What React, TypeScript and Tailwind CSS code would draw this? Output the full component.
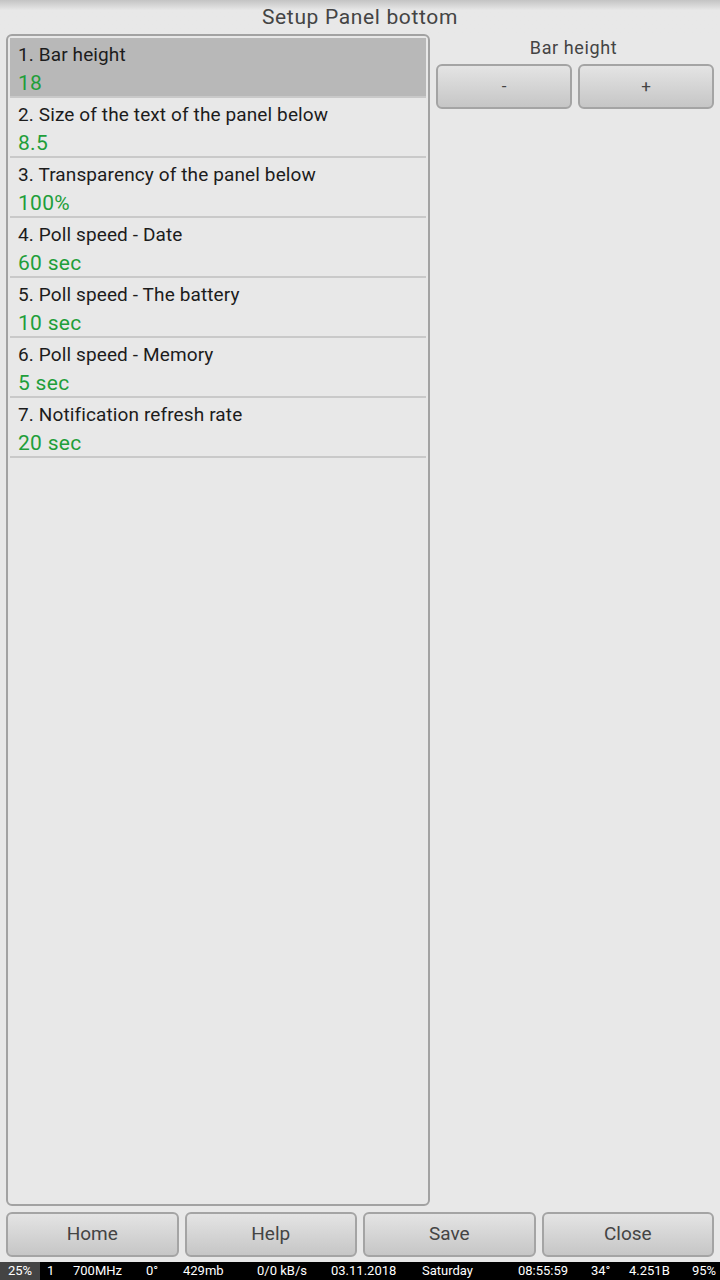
import React from "react";

const rows = [
  ["1. Bar height", "18"],
  ["2. Size of the text of the panel below", "8.5"],
  ["3. Transparency of the panel below", "100%"],
  ["4. Poll speed - Date", "60 sec"],
  ["5. Poll speed - The battery", "10 sec"],
  ["6. Poll speed - Memory", "5 sec"],
  ["7. Notification refresh rate", "20 sec"],
];

const btn =
  "flex items-center justify-center rounded-[6px] border-2 border-[#a4a4a4] bg-gradient-to-b from-[#e4e4e4] to-[#c6c6c6] text-[#444]";

export default function App() {
  return (
    <div
      className="w-[720px] h-[1280px] flex flex-col bg-[#e8e8e8] overflow-hidden"
      style={{ fontFamily: "Roboto, 'Noto Sans', sans-serif" }}
    >
      <div className="h-[34px] shrink-0 flex items-center justify-center bg-gradient-to-b from-[#c4c4c4] via-[#e8e8e8] via-[30%] to-[#e8e8e8] text-[21px] tracking-[0.65px] text-[#444] pt-[1px]">
        Setup Panel bottom
      </div>
      <div className="flex-1 flex gap-[6px] px-[6px]">
        <div className="w-[425px] h-[1172px] rounded-[6px] border-2 border-[#a2a2a2] p-[2px] flex flex-col">
          {rows.map(([l, v], i) => (
            <div
              key={i}
              className={`h-[60px] flex flex-col px-[8px] border-b-2 border-[#c9c9c9] ${
                i === 0 ? "bg-[#b8b8b8]" : ""
              }`}
            >
              <div className="text-[19px] tracking-[0.12px] leading-[22px] text-[#1c1c1c] mt-[6px]">{l}</div>
              <div className="text-[21px] tracking-[0.3px] leading-[24px] text-[#1f9e3a] mt-[5px]">{v}</div>
            </div>
          ))}
        </div>
        <div className="flex-1 flex flex-col">
          <div className="h-[28px] flex items-end justify-center text-[18px] tracking-[0.6px] text-[#444] pb-[1px] pr-[3px]">
            Bar height
          </div>
          <div className="flex gap-[6px] mt-[2px]">
            <div className={`${btn} w-[136px] h-[45px] text-[17px]`}>-</div>
            <div className={`${btn} w-[136px] h-[45px] text-[17px]`}>+</div>
          </div>
        </div>
      </div>
      <div className="flex gap-[6px] px-[6px] h-[45px] mt-[6px] shrink-0">
        {["Home", "Help", "Save", "Close"].map((t) => (
          <div key={t} className={`${btn} flex-1 text-[19px]`}>
            {t}
          </div>
        ))}
      </div>
      <div className="h-[18px] mt-[5px] shrink-0 bg-black text-white text-[13px] leading-[18px] relative">
        <div className="absolute left-0 top-0 h-[18px] w-[40px] bg-[#444]" />
        {[
          ["25%", 8],
          ["1", 47],
          ["700MHz", 73],
          ["0°", 146],
          ["429mb", 183],
          ["0/0 kB/s", 257],
          ["03.11.2018", 331],
          ["Saturday", 422],
          ["08:55:59", 518],
          ["34°", 591],
          ["4.251B", 629],
          ["95%", 692],
        ].map(([t, x]) => (
          <span key={t as string} className="absolute top-0" style={{ left: x as number }}>
            {t}
          </span>
        ))}
      </div>
    </div>
  );
}
